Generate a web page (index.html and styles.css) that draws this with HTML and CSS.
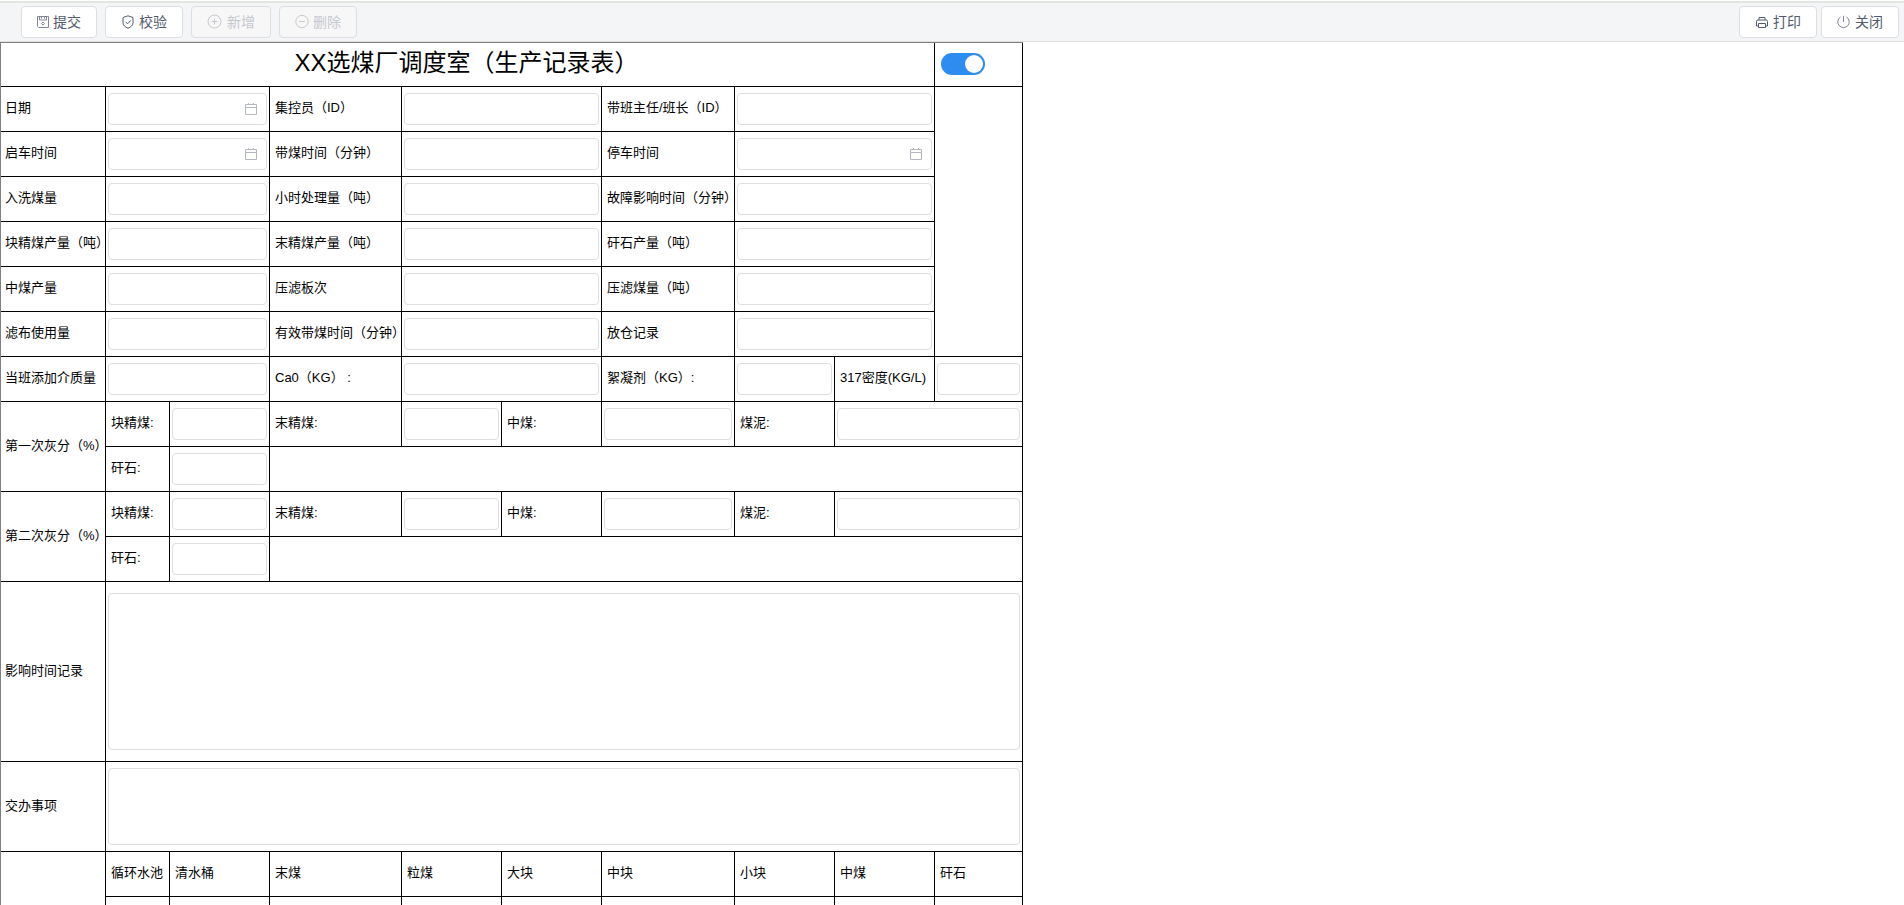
FILE: index.html
```html
<!DOCTYPE html>
<html lang="zh-CN">
<head>
<meta charset="utf-8">
<meta name="viewport" content="width=device-width, initial-scale=1">
<title>XX选煤厂调度室（生产记录表）</title>
<link rel="stylesheet" href="styles.css">
</head>
<body>
<header class="toolbar">
  <div class="group">
    <button type="button" class="btn"><svg class="ico ico-s" viewBox="0 0 12 12"><path d="M.5.5h11v11h-10l-1-1zM2.500.5v3.500h7V.5M4.500.5v2M7.500.5v2M4.500 7.500 6 6l1.500 1.500L6 9z"/></svg>提交</button>
    <button type="button" class="btn"><svg class="ico dark" viewBox="0 0 14 14"><path d="M7 .8 12 2.500v5.200c0 2.600-2.200 4.500-5 5.500-2.800-1-5-2.900-5-5.500V2.500zM4.500 6.800l2 2 3.200-3.300"/></svg>校验</button>
    <button type="button" class="btn" disabled><svg class="ico ico-l" viewBox="0 0 16 16"><circle cx="7.500" cy="7.500" r="6.500"/><path d="M4.500 7.500h6M7.500 4.500v6"/></svg>新增</button>
    <button type="button" class="btn" disabled><svg class="ico" viewBox="0 0 14 14"><circle cx="7" cy="6.500" r="6.200"/><path d="M4 6.500h6"/></svg>删除</button>
  </div>
  <div class="group right">
    <button type="button" class="btn"><svg class="ico dark" viewBox="0 0 14 14"><path d="M4 5V2.500h6V5M3.500 11H1.500V6.500q0-1.500 1.500-1.500h8q1.500 0 1.500 1.500V11h-2M3.500 8.500h7v4h-7z"/></svg>打印</button>
    <button type="button" class="btn"><svg class="ico" viewBox="0 0 14 14"><path d="M6.500 .8v6M3.500 2a5.700 5.700 0 1 0 6 0"/></svg>关闭</button>
  </div>
</header>
<main>
<table class="sheet">
  <colgroup>
    <col class="c105"><col class="c64"><col class="c100"><col class="c132"><col class="c100">
    <col class="c100"><col class="c133"><col class="c100"><col class="c100"><col class="c88">
  </colgroup>
  <tbody>
  <tr><td colspan="9" class="title"><h1>XX选煤厂调度室（生产记录表）</h1></td><td class="switch-cell"><input type="checkbox" class="switch" role="switch" aria-label="启用" checked></td></tr>
  <tr>
    <th><label for="date">日期</label></th><td colspan="2"><div class="picker"><input id="date" type="text"><svg class="cal" viewBox="0 0 14 14"><path d="M1.500 2.500h11v10h-11zM1.500 5.500h11M4.500 1v2M9.500 1v2"/></svg></div></td>
    <th><label for="ctrl">集控员（ID）</label></th><td colspan="2"><input id="ctrl" type="text"></td>
    <th><label for="lead">带班主任/班长（ID）</label></th><td colspan="2"><input id="lead" type="text"></td>
    <td rowspan="6"></td>
  </tr>
  <tr>
    <th><label for="start">启车时间</label></th><td colspan="2"><div class="picker"><input id="start" type="text"><svg class="cal" viewBox="0 0 14 14"><path d="M1.500 2.500h11v10h-11zM1.500 5.500h11M4.500 1v2M9.500 1v2"/></svg></div></td>
    <th><label for="run">带煤时间（分钟）</label></th><td colspan="2"><input id="run" type="text"></td>
    <th><label for="stop">停车时间</label></th><td colspan="2"><div class="picker"><input id="stop" type="text"><svg class="cal" viewBox="0 0 14 14"><path d="M1.500 2.500h11v10h-11zM1.500 5.500h11M4.500 1v2M9.500 1v2"/></svg></div></td>
  </tr>
  <tr>
    <th><label for="wash">入洗煤量</label></th><td colspan="2"><input id="wash" type="text"></td>
    <th><label for="hour">小时处理量（吨）</label></th><td colspan="2"><input id="hour" type="text"></td>
    <th><label for="fault">故障影响时间（分钟）</label></th><td colspan="2"><input id="fault" type="text"></td>
  </tr>
  <tr>
    <th><label for="lump">块精煤产量（吨）</label></th><td colspan="2"><input id="lump" type="text"></td>
    <th><label for="fine">末精煤产量（吨）</label></th><td colspan="2"><input id="fine" type="text"></td>
    <th><label for="gangue">矸石产量（吨）</label></th><td colspan="2"><input id="gangue" type="text"></td>
  </tr>
  <tr>
    <th><label for="mid">中煤产量</label></th><td colspan="2"><input id="mid" type="text"></td>
    <th><label for="press">压滤板次</label></th><td colspan="2"><input id="press" type="text"></td>
    <th><label for="pressed">压滤煤量（吨）</label></th><td colspan="2"><input id="pressed" type="text"></td>
  </tr>
  <tr>
    <th><label for="cloth">滤布使用量</label></th><td colspan="2"><input id="cloth" type="text"></td>
    <th><label for="valid">有效带煤时间（分钟）</label></th><td colspan="2"><input id="valid" type="text"></td>
    <th><label for="bin">放仓记录</label></th><td colspan="2"><input id="bin" type="text"></td>
  </tr>
  <tr>
    <th><label for="medium">当班添加介质量</label></th><td colspan="2"><input id="medium" type="text"></td>
    <th><label for="cao">Ca0（KG） :</label></th><td colspan="2"><input id="cao" type="text"></td>
    <th><label for="floc">絮凝剂（KG）:</label></th><td><input id="floc" type="text"></td>
    <th><label for="density">317密度(KG/L)</label></th><td><input id="density" type="text"></td>
  </tr>
  <tr>
    <th rowspan="2">第一次灰分（%）</th>
    <th class="sub"><label for="a1">块精煤:</label></th><td><input id="a1" type="text"></td>
    <th><label for="a2">末精煤:</label></th><td><input id="a2" type="text"></td>
    <th><label for="a3">中煤:</label></th><td><input id="a3" type="text"></td>
    <th><label for="a4">煤泥:</label></th><td colspan="2"><input id="a4" type="text"></td>
  </tr>
  <tr><th class="sub"><label for="a5">矸石:</label></th><td><input id="a5" type="text"></td><td colspan="7"></td></tr>
  <tr>
    <th rowspan="2">第二次灰分（%）</th>
    <th class="sub"><label for="b1">块精煤:</label></th><td><input id="b1" type="text"></td>
    <th><label for="b2">末精煤:</label></th><td><input id="b2" type="text"></td>
    <th><label for="b3">中煤:</label></th><td><input id="b3" type="text"></td>
    <th><label for="b4">煤泥:</label></th><td colspan="2"><input id="b4" type="text"></td>
  </tr>
  <tr><th class="sub"><label for="b5">矸石:</label></th><td><input id="b5" type="text"></td><td colspan="7"></td></tr>
  <tr class="row-tall"><th><label for="impact">影响时间记录</label></th><td colspan="9"><textarea id="impact" class="tall"></textarea></td></tr>
  <tr class="row-mid"><th><label for="todo">交办事项</label></th><td colspan="9"><textarea id="todo"></textarea></td></tr>
  <tr><th rowspan="2"></th><th>循环水池</th><th>清水桶</th><th>末煤</th><th>粒煤</th><th>大块</th><th>中块</th><th>小块</th><th>中煤</th><th>矸石</th></tr>
  <tr><td></td><td></td><td></td><td></td><td></td><td></td><td></td><td></td><td></td></tr>
  </tbody>
</table>
</main>
</body>
</html>
```

FILE: styles.css
```css
* { box-sizing: border-box; }
html, body { height: 100%; }
body {
  margin: 0;
  display: flex;
  flex-direction: column;
  overflow: hidden;
  background: #fff;
  color: #000;
  font: 13px/20px "Liberation Sans", "Noto Sans CJK SC", sans-serif;
}
.toolbar {
  flex: none;
  display: flex;
  justify-content: space-between;
  margin-top: 1px;
  padding: 3px 5px 3px 21px;
  border-top: 2px solid #e1e6e3;
  border-bottom: 1px solid #dcdee2;
  background: #f4f5f7;
}
.group { display: flex; gap: 8px; }
.group.right { gap: 4px; }
.btn {
  display: flex;
  align-items: center;
  gap: 4px;
  height: 32px;
  padding: 0 15px;
  border: 1px solid #dcdee2;
  border-radius: 4px;
  background: #fff;
  color: #515a6e;
  font: 14px/20px "Liberation Sans", "Noto Sans CJK SC", sans-serif;
}
.btn:disabled { background: #f7f7f7; color: #c5c8ce; }
.ico {
  flex: none;
  width: 14px;
  height: 14px;
  fill: none;
  stroke: #808695;
}
.ico-s { width: 12px; height: 12px; }
.ico-l { width: 16px; height: 16px; }
.ico.dark { stroke: #515a6e; }
.btn:disabled .ico { stroke: #c5c8ce; }

main { flex: 1; min-height: 0; overflow: hidden; }
.sheet {
  table-layout: fixed;
  width: min-content;
  border-collapse: separate;
  border-spacing: 0;
  border-top: 1px solid #808080;
  border-left: 1px solid #808080;
}
.c64 { width: 64px; }
.c88 { width: 88px; }
.c100 { width: 100px; }
.c105 { width: 105px; }
.c132 { width: 132px; }
.c133 { width: 133px; }
.sheet tr { height: 45px; }
.sheet tr:first-child { height: 44px; }
.sheet .row-tall { height: 180px; }
.sheet .row-mid { height: 90px; }
th, td {
  padding: 0 2px;
  border-right: 1px solid #000;
  border-bottom: 1px solid #000;
  vertical-align: middle;
}
th {
  padding: 0 0 2px 5px;
  font-weight: normal;
  text-align: left;
  white-space: nowrap;
}
th:first-child { padding-left: 4px; }
th.sub { padding-left: 5px; }
.title { padding: 0 2px 4px 0; }
h1 {
  margin: 0;
  font-size: 24px;
  line-height: 36px;
  font-weight: normal;
  text-align: center;
}
input[type="text"], textarea {
  display: block;
  width: 100%;
  height: 32px;
  margin: 0;
  padding: 4px 7px;
  border: 1px solid #dcdee2;
  border-radius: 4px;
  background: #fff;
  font: inherit;
  resize: none;
}
textarea { height: 77px; }
textarea.tall { height: 157px; }
.picker { position: relative; }
.cal {
  position: absolute;
  top: 9px;
  right: 9px;
  width: 14px;
  height: 14px;
  fill: none;
  stroke: #b5b8c0;
}
.switch-cell { padding: 0 0 2px 6px; }
.switch {
  appearance: none;
  display: flex;
  justify-content: flex-end;
  align-items: center;
  width: 44px;
  height: 22px;
  margin: 0;
  padding: 2px;
  border-radius: 11px;
  background: #2d8cf0;
}
.switch::after {
  content: "";
  width: 18px;
  height: 18px;
  border-radius: 50%;
  background: #fff;
}
.switch:not(:checked) { justify-content: flex-start; background: #c5c8ce; }
```
